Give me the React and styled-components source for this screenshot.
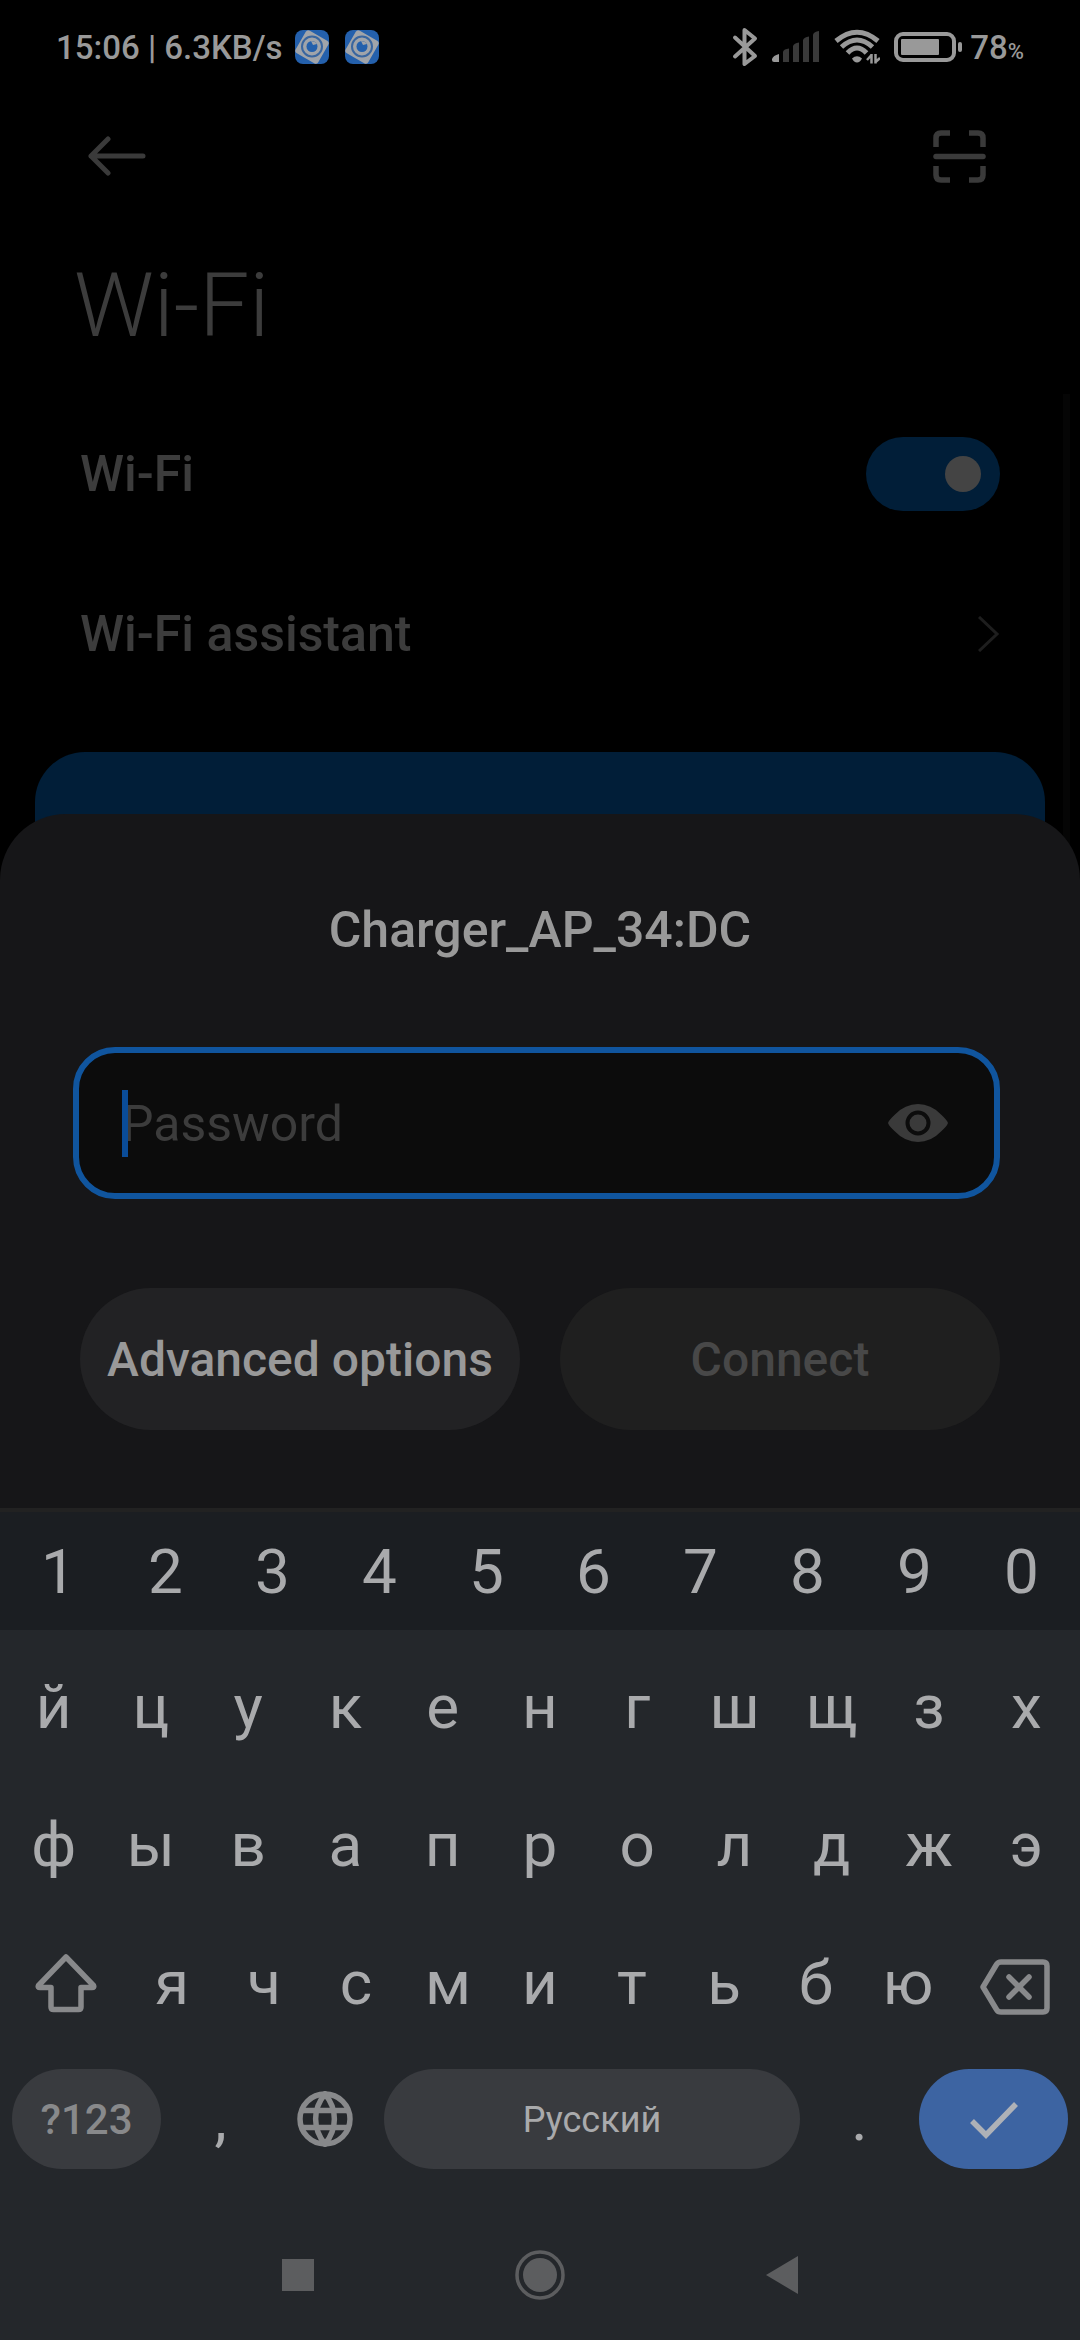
import React, { useState } from "react";
import styled, { createGlobalStyle } from "styled-components";

const GlobalStyle = createGlobalStyle`
  *, *::before, *::after { box-sizing: border-box; }
  body {
    margin: 0;
    background: #000;
    font-family: Roboto, "Noto Sans", sans-serif;
    -webkit-font-smoothing: antialiased;
  }
  button, input { font: inherit; color: inherit; }
  svg { display: block; flex: none; }
`;

const Screen = styled.div`
  display: flex;
  flex-direction: column;
  min-height: 100vh;
  overflow: hidden;
  background: #000;
`;

const StatusBar = styled.header`
  display: flex;
  align-items: center;
  justify-content: space-between;
  height: 94px;
  padding: 0 56px;
  font-size: 33px;
  font-weight: 500;
  line-height: 40px;
  color: #999;
`;

const StatusGroup = styled.div`
  display: flex;
  align-items: center;
  gap: ${(p) => p.$gap}px;
`;

const StatusText = styled.span`
  display: flex;
  align-items: baseline;
  padding-top: 2px;
`;

const Percent = styled.small`
  font-size: 22px;
  line-height: 24px;
`;

const IconButton = styled.button`
  display: flex;
  align-items: center;
  justify-content: center;
  padding: 0;
  border: 0;
  background: none;
  color: ${(p) => p.$color || "#3a3a3a"};
`;

const AppBar = styled.nav`
  display: flex;
  align-items: center;
  justify-content: space-between;
  height: 124px;
  padding: 0 94px 0 88px;
`;

const PageTitle = styled.h1`
  margin: 0;
  padding: 36px 74px;
  font-size: 89px;
  font-weight: 300;
  line-height: 104px;
  color: #3c3c3c;
`;

const Settings = styled.main`
  position: relative;
`;

const ScrollThumb = styled.div`
  position: absolute;
  top: 0;
  right: 10px;
  bottom: 0;
  width: 7px;
  background: #050505;
`;

const SettingRow = styled.label`
  display: flex;
  align-items: center;
  justify-content: space-between;
  height: 160px;
  padding: 0 80px;
  font-size: 50px;
  font-weight: 500;
  line-height: 56px;
  color: #3c3c3c;
  text-decoration: none;
`;

const Toggle = styled.input`
  appearance: none;
  display: flex;
  align-items: center;
  justify-content: flex-end;
  width: 134px;
  height: 74px;
  margin: 0;
  padding: 0 19px;
  border-radius: 37px;
  background: #011e38;

  &::before {
    content: "";
    width: 36px;
    height: 36px;
    border-radius: 50%;
    background: #444;
  }

  &:not(:checked) { justify-content: flex-start; }
`;

const NetworkCard = styled.section`
  height: 120px;
  margin: 38px 35px 0;
  border-radius: 50px;
  background: #011e38;
`;

const Sheet = styled.form`
  position: relative;
  margin-top: -58px;
  padding: 88px 80px 78px;
  border-radius: 66px 66px 0 0;
  background: #161618;
`;

const SheetTitle = styled.h2`
  margin: 0;
  font-size: 50px;
  font-weight: 500;
  line-height: 56px;
  text-align: center;
  color: #999;
`;

const PasswordField = styled.div`
  position: relative;
  display: flex;
  align-items: center;
  height: 152px;
  margin: 89px 0 89px -7px;
  padding: 0 46px 0 43px;
  border: 6px solid #10559e;
  border-radius: 42px;
  background: #0c0c0c;
`;

const PasswordInput = styled.input`
  flex: 1;
  min-width: 0;
  padding: 2px 0 0;
  border: 0;
  outline: 0;
  background: none;
  font-size: 50px;
  line-height: 56px;
  color: #999;

  &::placeholder { color: #3c3c3c; opacity: 1; }
`;

const Caret = styled.span`
  position: absolute;
  left: 43px;
  width: 6px;
  height: 67px;
  background: #0a4c98;
`;

const SheetActions = styled.div`
  display: grid;
  grid-template-columns: 1fr 1fr;
  gap: 40px;
`;

const ActionButton = styled.button`
  height: 142px;
  padding: 2px 0 0;
  border: 0;
  border-radius: 71px;
  background: ${(p) => (p.disabled ? "#1f1f1f" : "#222224")};
  font-size: 48px;
  font-weight: 500;
  line-height: 56px;
  color: ${(p) => (p.disabled ? "#484848" : "#999")};
`;

const Keyboard = styled.section`
  flex: 1;
  border-top: 4px solid #222;
  background: #24272b;
  color: #a9aaac;
`;

const NumberRow = styled.div`
  display: flex;
  height: 118px;
  padding: 2px 5px 0;
  margin-bottom: 8px;
  background: #1b1e22;
`;

const LetterRow = styled.div`
  display: flex;
  height: 138px;
  padding: 0 5px;
`;

const Key = styled.button`
  display: flex;
  flex: ${(p) => (p.$width ? `0 0 ${p.$width}px` : "1 1 0")};
  align-items: center;
  justify-content: center;
  min-width: 0;
  padding: ${(p) => (p.$low ? "8px" : "0")} 0 0;
  border: 0;
  background: none;
  font-size: 62px;
  line-height: 72px;
  color: ${(p) => (p.$dim ? "#88898b" : "#a9aaac")};
`;

const BottomRow = styled.div`
  display: flex;
  align-items: center;
  height: 134px;
  padding: 0 12px;
`;

const Pill = styled(Key)`
  height: 100px;
  padding-top: 2px;
  border-radius: 50px;
  background: ${(p) => (p.$accent ? "#3d64a2" : "#393b3f")};
  font-size: ${(p) => (p.$bold ? 42 : 36)}px;
  font-weight: ${(p) => (p.$bold ? 500 : 400)};
  line-height: 48px;
`;

const SpaceSlot = styled.div`
  display: flex;
  flex: 1;
  padding-left: 14px;
`;

const SystemNav = styled.nav`
  display: grid;
  grid-template-columns: repeat(3, 242px);
  justify-content: center;
  height: 130px;
  margin-top: 24px;
`;

function CameraAppIcon() {
  return (
    <svg width="34" height="34" viewBox="0 0 34 34">
      <defs>
        <clipPath id="app-shape"><rect width="34" height="34" rx="8" /></clipPath>
      </defs>
      <g clipPath="url(#app-shape)">
        <rect width="34" height="34" fill="#2460ac" />
        <rect x="4" y="4" width="26" height="26" rx="3" fill="#a0a4aa" transform="rotate(30 17 17)" />
        <circle cx="17" cy="16.500" r="10" fill="none" stroke="#3a669f" strokeWidth="2" />
        <circle cx="17" cy="16.500" r="5.500" fill="#2460ac" />
        <path d="M16 11 L18 15 L22 14 Q21 11.500 16 11Z" fill="#a0a4aa" />
      </g>
    </svg>
  );
}

function BluetoothIcon() {
  return (
    <svg width="26" height="40" viewBox="0 0 26 40" fill="none" stroke="#999" strokeWidth="4" strokeLinejoin="round" strokeLinecap="round">
      <path d="M3 10.500 L23 29 L12.500 37 V3 L23 11.500 L3 29.500" />
    </svg>
  );
}

function SignalIcon() {
  return (
    <svg width="48" height="32" viewBox="0 0 48 32" fill="#393939">
      <path d="M0 28 Q1 24.500 7 23 V31 H2 Q0 31 0 29Z" fill="#999" />
      <path d="M11 20.500 Q12 18 17 17.500 V31 H11Z" />
      <path d="M21 15 Q22 12 27 11.500 V31 H21Z" />
      <path d="M31 9 Q32 6 37 5.500 V31 H31Z" />
      <path d="M41 3.500 Q42 0.500 47 0 V31 H41Z" />
    </svg>
  );
}

function WifiIcon() {
  return (
    <svg width="46" height="36" viewBox="0 0 46 36" fill="none" stroke="#999" strokeWidth="5">
      <path d="M2 12 Q23 -5.500 44 12" />
      <path d="M7.500 18 Q23 4 38.500 18" />
      <path d="M13.500 24 Q23 14 32.500 24" />
      <path d="M18 29.500 Q23 25 28 29.500 Q26 33.500 23 33.500 Q20 33.500 18 29.500Z" fill="#999" stroke="none" />
      <path d="M37.500 25 V34.500 M41.500 25 V34.500 M33 31 L37.500 26 M46 29 L41.500 33" strokeWidth="2.500" />
    </svg>
  );
}

function BatteryIcon() {
  return (
    <svg width="68" height="30" viewBox="0 0 68 30">
      <rect x="2" y="2" width="58" height="26" rx="7" fill="none" stroke="#999" strokeWidth="4" />
      <rect x="7" y="7" width="38" height="16" rx="1" fill="#999" />
      <rect x="64" y="10" width="4" height="10" rx="2" fill="#999" />
    </svg>
  );
}

function BackIcon() {
  return (
    <svg width="58" height="40" viewBox="0 0 58 40" fill="none" stroke="currentColor" strokeWidth="5" strokeLinecap="round" strokeLinejoin="round">
      <path d="M20 3 L3 20 L20 37 M3 20 H55" />
    </svg>
  );
}

function ScanIcon() {
  return (
    <svg width="53" height="53" viewBox="0 0 53 53" fill="none" stroke="currentColor" strokeWidth="5.500">
      <path d="M3 17 V8 Q3 3 8 3 H17 M36 3 H45 Q50 3 50 8 V17 M50 36 V45 Q50 50 45 50 H36 M17 50 H8 Q3 50 3 45 V36" />
      <path d="M3 26.500 H50" strokeLinecap="round" />
    </svg>
  );
}

function ChevronIcon() {
  return (
    <svg width="22" height="36" viewBox="0 0 22 36" fill="none" stroke="#1e1e1e" strokeWidth="3">
      <path d="M1 1 L19 18 L1 35" />
    </svg>
  );
}

function EyeIcon() {
  return (
    <svg width="60" height="40" viewBox="0 0 60 40">
      <path d="M0 20 Q1 17 7 11.500 Q17 1 30 1 Q43 1 53 11.500 Q59 17 60 20 Q59 23 53 28.500 Q43 39 30 39 Q17 39 7 28.500 Q1 23 0 20Z" fill="currentColor" />
      <circle cx="30" cy="20" r="10.500" fill="none" stroke="#0c0c0c" strokeWidth="4" />
    </svg>
  );
}

function ShiftIcon() {
  return (
    <svg width="62" height="60" viewBox="0 0 62 60" fill="none" stroke="currentColor" strokeWidth="5.500" strokeLinejoin="round">
      <path d="M31 4 L58.500 32.500 Q59.500 34.500 57 34.500 H46 V54 Q46 56.500 43.500 56.500 H18.500 Q16 56.500 16 54 V34.500 H5 Q2.500 34.500 3.500 32.500 Z" />
    </svg>
  );
}

function DeleteIcon() {
  return (
    <svg width="70" height="56" viewBox="0 0 70 56" fill="none" stroke="currentColor" strokeWidth="5.500" strokeLinejoin="round">
      <path d="M21 3 H63 Q67 3 67 7 V49 Q67 53 63 53 H21 Q18 53 16.500 50.500 L3 28 L16.500 5.500 Q18 3 21 3Z" />
      <path d="M29 18 L49 38 M49 18 L29 38" strokeLinecap="round" />
    </svg>
  );
}

function GlobeIcon() {
  return (
    <svg width="56" height="56" viewBox="0 0 56 56" fill="none" stroke="currentColor" strokeWidth="5.500">
      <circle cx="28" cy="28" r="25" />
      <path d="M28 3 C15.500 18 15.500 38 28 53 C40.500 38 40.500 18 28 3Z M5 19.500 H51 M5 36.500 H51" />
    </svg>
  );
}

function CheckIcon() {
  return (
    <svg width="50" height="40" viewBox="0 0 50 40" fill="none" stroke="#aeb1b7" strokeWidth="5.500">
      <path d="M3 21 L17 35 L47 4" />
    </svg>
  );
}

const digits = "1234567890".split("");
const letterRows = ["йцукенгшщзх", "фывапролджэ"].map((row) => row.split(""));
const lastLetters = "ячсмитьбю".split("");

export default function App() {
  const [enabled, setEnabled] = useState(true);
  const [password, setPassword] = useState("");
  const [visible, setVisible] = useState(false);
  const type = (char) => setPassword((value) => value + char);

  return (
    <>
      <GlobalStyle />
      <Screen>
        <StatusBar>
          <StatusGroup $gap={12}>
            <StatusText>15:06 | 6.3KB/s</StatusText>
            <StatusGroup $gap={16}>
              <CameraAppIcon />
              <CameraAppIcon />
            </StatusGroup>
          </StatusGroup>
          <StatusGroup $gap={14}>
            <BluetoothIcon />
            <SignalIcon />
            <WifiIcon />
            <StatusGroup $gap={8}>
              <BatteryIcon />
              <StatusText>78<Percent>%</Percent></StatusText>
            </StatusGroup>
          </StatusGroup>
        </StatusBar>

        <AppBar>
          <IconButton type="button" aria-label="Back"><BackIcon /></IconButton>
          <IconButton type="button" aria-label="Scan QR code"><ScanIcon /></IconButton>
        </AppBar>
        <PageTitle>Wi-Fi</PageTitle>

        <Settings>
          <SettingRow htmlFor="wifi-enabled">
            Wi-Fi
            <Toggle
              id="wifi-enabled"
              type="checkbox"
              role="switch"
              checked={enabled}
              onChange={(e) => setEnabled(e.target.checked)}
            />
          </SettingRow>
          <SettingRow as="a" href="#assistant">
            Wi-Fi assistant
            <ChevronIcon />
          </SettingRow>
          <NetworkCard />
          <ScrollThumb />
        </Settings>

        <Sheet onSubmit={(e) => e.preventDefault()}>
          <SheetTitle>Charger_AP_34:DC</SheetTitle>
          <PasswordField>
            <PasswordInput
              type={visible ? "text" : "password"}
              aria-label="Password"
              placeholder="Password"
              autoComplete="off"
              value={password}
              onChange={(e) => setPassword(e.target.value)}
            />
            {!password && <Caret />}
            <IconButton type="button" aria-label="Show password" onClick={() => setVisible(!visible)}>
              <EyeIcon />
            </IconButton>
          </PasswordField>
          <SheetActions>
            <ActionButton type="button">Advanced options</ActionButton>
            <ActionButton type="submit" disabled={!password}>Connect</ActionButton>
          </SheetActions>
        </Sheet>

        <Keyboard>
          <NumberRow>
            {digits.map((d) => <Key key={d} type="button" onClick={() => type(d)}>{d}</Key>)}
          </NumberRow>
          {letterRows.map((row) => (
            <LetterRow key={row[0]}>
              {row.map((c) => <Key key={c} type="button" onClick={() => type(c)}>{c}</Key>)}
            </LetterRow>
          ))}
          <LetterRow>
            <Key type="button" $width={121} $dim aria-label="Shift"><ShiftIcon /></Key>
            {lastLetters.map((c) => <Key key={c} type="button" onClick={() => type(c)}>{c}</Key>)}
            <Key type="button" $width={121} $dim $low aria-label="Delete" onClick={() => setPassword(password.slice(0, -1))}>
              <DeleteIcon />
            </Key>
          </LetterRow>
          <BottomRow>
            <Pill type="button" $width={149} $dim $bold>?123</Pill>
            <Key type="button" $width={119} onClick={() => type(",")}>,</Key>
            <Key type="button" $width={90} $dim aria-label="Language"><GlobeIcon /></Key>
            <SpaceSlot>
              <Pill type="button" onClick={() => type(" ")}>Русский</Pill>
            </SpaceSlot>
            <Key type="button" $width={119} onClick={() => type(".")}>.</Key>
            <Pill type="button" $width={149} $accent aria-label="Done"><CheckIcon /></Pill>
          </BottomRow>
          <SystemNav>
            <IconButton type="button" aria-label="Recent apps" $color="#5c5d5f">
              <svg width="32" height="32" viewBox="0 0 32 32"><rect width="32" height="32" fill="currentColor" /></svg>
            </IconButton>
            <IconButton type="button" aria-label="Home" $color="#5c5d5f">
              <svg width="50" height="50" viewBox="0 0 50 50">
                <circle cx="25" cy="25" r="23" fill="none" stroke="currentColor" strokeWidth="3.500" />
                <circle cx="25" cy="25" r="17" fill="currentColor" />
              </svg>
            </IconButton>
            <IconButton type="button" aria-label="Back" $color="#5c5d5f">
              <svg width="32" height="38" viewBox="0 0 32 38"><path d="M0 19 L32 0 V38Z" fill="currentColor" /></svg>
            </IconButton>
          </SystemNav>
        </Keyboard>
      </Screen>
    </>
  );
}
